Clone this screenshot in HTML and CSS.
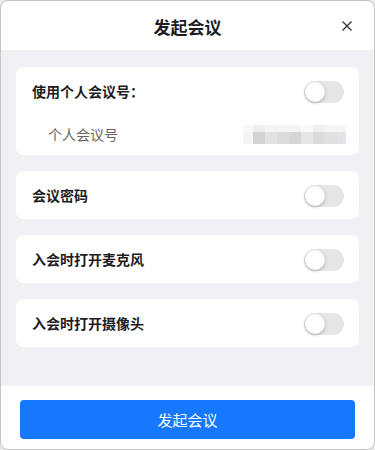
FILE: index.html
```html
<!DOCTYPE html>
<html lang="zh">
<head>
<meta charset="utf-8">
<link rel="stylesheet" href="styles.css">
</head>
<body>
<div class="dialog">
  <div class="header">
    <div class="title">发起会议</div>
    <svg class="close" width="12" height="12" viewBox="0 0 12 12"><path d="M1.5 1.5L10.5 10.5M10.5 1.5L1.5 10.5" stroke="#333" stroke-width="1.3" fill="none"/></svg>
  </div>
  <div class="content">
    <div class="card card-tall">
      <div class="row">
        <span class="label">使用个人会议号：</span>
        <span class="toggle"><span class="knob"></span></span>
      </div>
      <div class="subrow">
        <span class="sublabel">个人会议号</span>
        <span class="mosaic"></span>
      </div>
    </div>
    <div class="card">
      <div class="row">
        <span class="label">会议密码</span>
        <span class="toggle"><span class="knob"></span></span>
      </div>
    </div>
    <div class="card">
      <div class="row">
        <span class="label">入会时打开麦克风</span>
        <span class="toggle"><span class="knob"></span></span>
      </div>
    </div>
    <div class="card">
      <div class="row">
        <span class="label">入会时打开摄像头</span>
        <span class="toggle"><span class="knob"></span></span>
      </div>
    </div>
  </div>
  <div class="footer">
    <button class="btn">发起会议</button>
  </div>
</div>
</body>
</html>
```
FILE: styles.css
```css
* { box-sizing: border-box; }
html, body { margin: 0; padding: 0; background: #e9e9ec; }
body { font-family: "Noto Sans CJK SC", "Noto Sans", sans-serif; }
.dialog {
  width: 375px;
  height: 450px;
  border: 1px solid #c4c4c4;
  border-radius: 8px;
  background: #fff;
  overflow: hidden;
  display: flex;
  flex-direction: column;
}
.header {
  height: 49px;
  flex: none;
  display: flex;
  align-items: center;
  justify-content: center;
  position: relative;
}
.title {
  font-size: 17px;
  font-weight: 700;
  color: #1d1d1f;
  margin-top: 1px;
}
.close {
  position: absolute;
  right: 21px;
  top: 19px;
}
.content {
  flex: 1;
  background: #f0f1f5;
  padding: 17px 15px 0 15px;
  display: flex;
  flex-direction: column;
  gap: 16px;
}
.card {
  background: #fff;
  border-radius: 8px;
  height: 48px;
  padding: 0 15px 0 16px;
  display: flex;
  flex-direction: column;
}
.card-tall { height: 88px; }
.row {
  height: 48px;
  flex: none;
  display: flex;
  align-items: center;
  justify-content: space-between;
}
.label {
  font-size: 14px;
  font-weight: 700;
  color: #1d1d1f;
}
.toggle {
  width: 40px;
  height: 22px;
  border-radius: 11px;
  background: #e6e6e6;
  position: relative;
  margin-top: 1px;
}
.knob {
  position: absolute;
  left: 1px;
  top: 1px;
  width: 20px;
  height: 20px;
  border-radius: 50%;
  background: #fff;
  box-shadow: 0 1px 3px rgba(0,0,0,0.3);
}
.subrow {
  height: 38px;
  flex: none;
  display: flex;
  align-items: center;
  justify-content: space-between;
  padding-left: 16px;
}
.sublabel {
  font-size: 14px;
  color: #666;
}
.mosaic {
  width: 103px;
  height: 19px;
  margin-right: -2px;
  background:
    linear-gradient(to right, #f5f5f6 0 10px, #d4d4d6 10px 22px, #e3e3e5 22px 34px, #dcdcde 34px 46px, #d6d6d8 46px 58px, #e6e6e8 58px 70px, #dbdbdd 70px 82px, #e0e0e2 82px 94px, #e4e4e8 94px 103px) 0 7px / 103px 12px no-repeat,
    linear-gradient(to right, #f8f8f8 0 10px, #eeeeef 10px 22px, #f4f4f5 22px 58px, #f8f8f8 58px 70px, #efeff0 70px 82px, #f5f5f6 82px 103px) 0 0 / 103px 7px no-repeat;
}
.footer {
  height: 63px;
  flex: none;
  padding: 14px 19px 0 19px;
}
.btn {
  width: 100%;
  height: 39px;
  border: none;
  border-radius: 4px;
  background: #1677ff;
  color: #fff;
  font-family: "Noto Sans CJK SC", sans-serif;
  font-size: 15px;
  padding: 0;
}
```
